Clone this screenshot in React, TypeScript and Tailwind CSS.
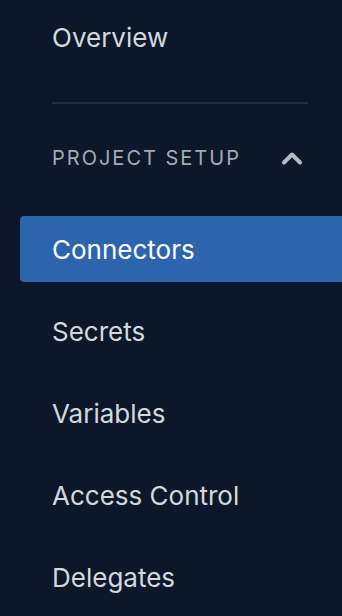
const items = ['Connectors', 'Secrets', 'Variables', 'Access Control', 'Delegates']

function NavRow({ label, active }: { label: string; active?: boolean }) {
    return (
        <div
            className={
                active
                    ? 'flex h-[66px] items-center rounded-l-[4px] bg-[#2c64ae] pl-[32px] text-[26px] text-white'
                    : 'flex h-[66px] items-center pl-[32px] text-[26px] text-[#d3d8df]'
            }
        >
            {label}
        </div>
    )
}

export default function App() {
    return (
        <div
            className="h-[616px] w-full overflow-hidden bg-[#0c1829] pl-[20px]"
            style={{ fontFamily: 'Inter, "Noto Sans", sans-serif' }}
        >
            <div className="mt-[4px]">
                <NavRow label="Overview" />
            </div>
            <div className="ml-[32px] mr-[34px] mt-[32px] h-[2px] bg-[#222d3d]" />
            <div className="mt-[34px] flex h-[40px] items-center justify-between pl-[32px] pr-[39px]">
                <span className="text-[20px] tracking-[2px] text-[#a3abb6]">PROJECT SETUP</span>
                <svg width="22" height="14" viewBox="0 0 22 14" fill="none">
                    <path d="M3 11.5 L11 3.5 L19 11.5" stroke="#b4bac3" strokeWidth="4" strokeLinecap="round" strokeLinejoin="round" />
                </svg>
            </div>
            <div className="mt-[38px] flex flex-col gap-[16px]">
                {items.map((label, i) => (
                    <NavRow key={label} label={label} active={i === 0} />
                ))}
            </div>
        </div>
    )
}
